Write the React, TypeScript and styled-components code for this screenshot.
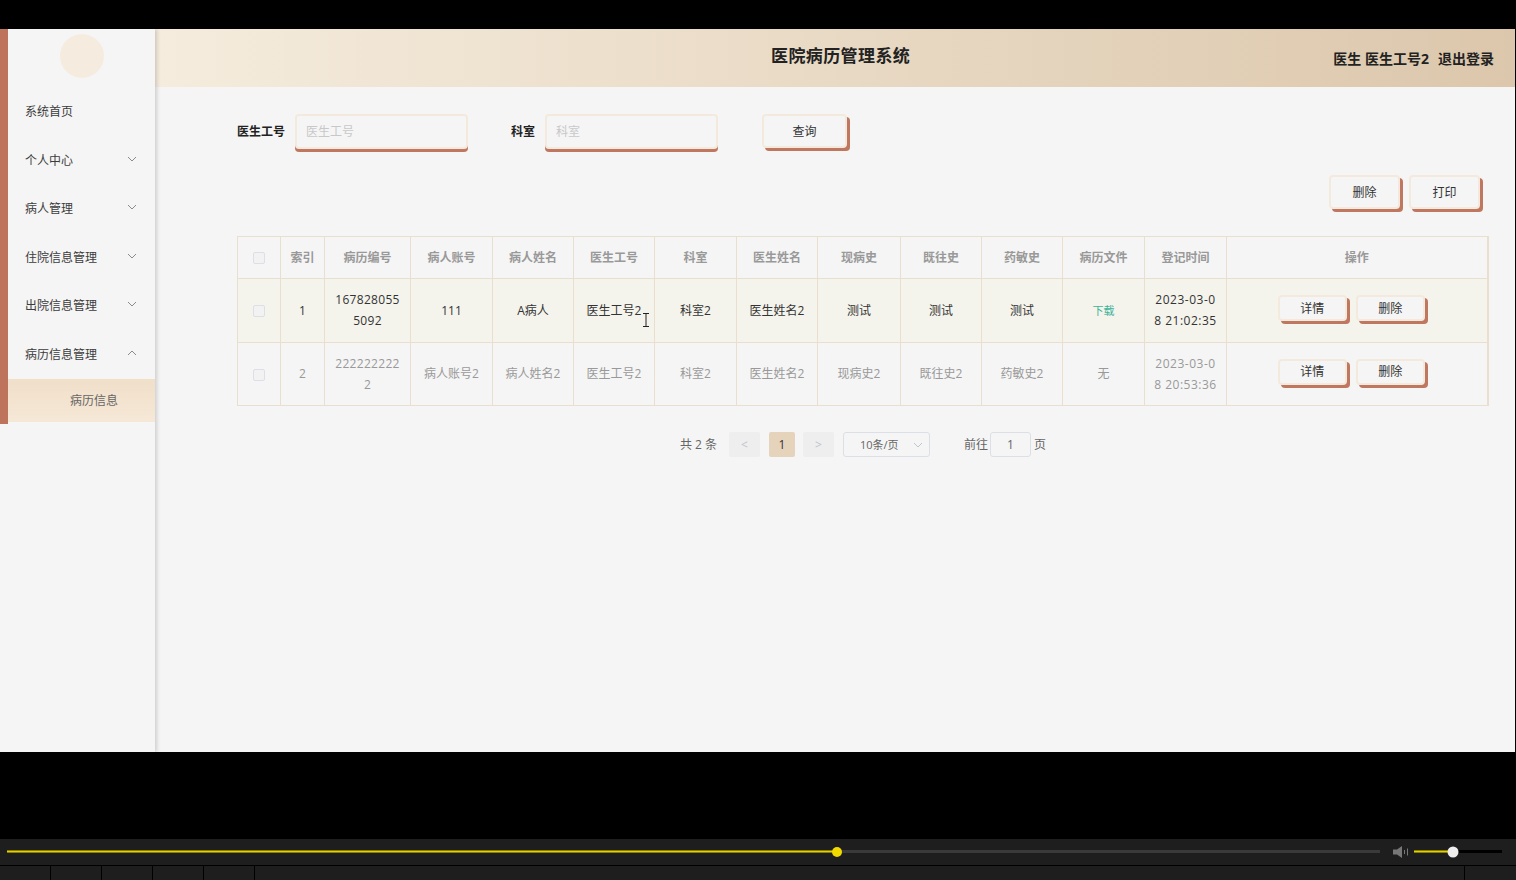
import React from "react";
import styled, { createGlobalStyle } from "styled-components";

const Global = createGlobalStyle`
  html, body { margin: 0; padding: 0; background: #000; overflow: hidden; }
  * { box-sizing: border-box; }
  body { font-family: "Open Sans", "Noto Sans CJK SC", sans-serif; font-size: 12px; }
`;

const Screen = styled.div`
  width: 1516px; height: 880px; display: flex; flex-direction: column; background: #000;
`;
const TopGap = styled.div`height: 29px; flex: none;`;
const App = styled.div`height: 723px; width: 1515px; flex: none; display: flex; background: #f5f5f5;`;
const Sidebar = styled.aside`
  width: 155px; flex: none; background: #f5f5f5; position: relative; z-index: 1;
  box-shadow: 2px 0 4px rgba(0,0,0,.16);
`;
const Menu = styled.nav`
  border-left: 8px solid #bd735c; padding-bottom: 2px; display: flex; flex-direction: column;
`;
const AvatarWrap = styled.div`height: 59px; padding: 5px 0 0 52px; flex: none;`;
const Avatar = styled.div`width: 44px; height: 44px; border-radius: 50%; background: #f5ecdf;`;
const MenuItem = styled.div`
  height: 48.5px; display: flex; align-items: center; justify-content: space-between;
  padding: 0 18px 0 17px; color: #3c3c3c; font-size: 12px; line-height: 16px;
`;
const Chevron = styled.svg`width: 10px; height: 10px; margin-top: -4px; color: #8b8b8b;`;
const SubItem = styled.div`
  height: 43px; display: flex; align-items: center; padding: 0 0 2px 62px; color: #666;
  background: linear-gradient(180deg, #f0dfc9 0%, #f6e8d7 100%);
`;
const Content = styled.main`flex: 1; min-width: 0; display: flex; flex-direction: column;`;
const Header = styled.header`
  height: 58px; flex: none; display: flex; align-items: center; position: relative;
  background: linear-gradient(90deg, #f5ecdd 0%, #dcc7ac 100%);
  padding: 0 21px 0 0; justify-content: flex-end; color: #222;
`;
const Title = styled.h1`
  position: absolute; left: 616px; top: 16px; margin: 0; font-size: 17px; line-height: 22px; font-weight: 700;
  letter-spacing: .4px;
`;
const UserInfo = styled.div`
  display: flex; gap: 9px; font-size: 14px; font-weight: 700; line-height: 20px; margin-top: 2px;
`;
const Body = styled.div`flex: 1; padding: 27px 27px 0 82px; position: relative;`;
const SearchRow = styled.form`display: flex; align-items: flex-start; height: 37px; margin: 0;`;
const Label = styled.label`
  font-size: 12px; font-weight: 700; color: #222; line-height: 36px; margin-right: 10px; width: ${p => p.$w}px;
`;
const TextBox = styled.input`
  width: 173px; height: 35px; padding: 0 9px; border: 2px solid #f3eadd; border-radius: 4px;
  background: #f5f5f5; box-shadow: 0 3px 0 #c0775f; outline: none; font: inherit; font-size: 12px;
  margin-right: ${p => p.$mr}px;
  &::placeholder { color: #c8c8c8; }
`;
const Btn = styled.button`
  width: ${p => p.$w}px; height: ${p => p.$h}px; padding: 0; border: 2px solid #f3eadd; border-radius: 4px;
  background: #f5f5f5; color: #333; font: inherit; font-size: 12px; box-shadow: 3px 3px 0 #c0775f;
`;
const ActionRow = styled.div`display: flex; justify-content: flex-end; gap: 9px; padding: 24px 8px 0 0; height: 85px;`;
const Table = styled.table`
  width: 1250px; table-layout: fixed; border-collapse: collapse; border: 1px solid #eadfcf; border-right-width: 2px;
  font-size: 12px;
  th, td { border: 1px solid #eadfcf; text-align: center; padding: 0; font-weight: 400; }
  th { height: 42px; color: #999; font-weight: 600; padding-bottom: 2px; }
  td { line-height: 21px; padding: 0 10px 1px; }
`;
const Row = styled.tr`
  height: ${p => p.$active ? 64 : 63}px; color: ${p => p.$active ? "#333" : "#999"};
  background: ${p => p.$active ? "#f4f4ec" : "transparent"};
`;
const Check = styled.span`
  display: inline-block; width: 12px; height: 12px; vertical-align: middle; border: 1px solid #dcdfe6;
  border-radius: 2px; background: #f2f2f2;
`;
const Wrapped = styled.span`
  display: block; word-break: break-all; letter-spacing: ${p => p.$ls}px; margin: 0 -2px;
`;
const Ops = styled.div`display: flex; justify-content: center; gap: 9px; margin-top: -4px; padding-right: 11px;`;
const Link = styled.span`color: #3eb39a; font-size: 11px;`;
const Pager = styled.div`
  display: flex; align-items: center; margin: 26px 0 0; padding-left: 443px; height: 25px; color: #666; font-size: 12px;
`;
const PagerText = styled.span`padding-bottom: 2px; flex: none; width: ${p => p.$w ? `${p.$w}px` : "auto"};`;
const PagerBtn = styled.span`
  width: ${p => p.$w}px; height: 25px; border-radius: 2px; display: flex; align-items: center; justify-content: center;
  margin-right: ${p => p.$mr}px; background: ${p => p.$on ? "#e6d3bc" : "#eeeeee"}; color: ${p => p.$on ? "#333" : "#c0c4cc"};
`;
const PageSize = styled.div`
  width: 87px; height: 25px; border: 1px solid #dcdfe6; border-radius: 3px; display: flex; align-items: center;
  justify-content: space-between; padding: 0 6px 2px 16px; margin-right: 34px; color: #666; font-size: 11px;
`;
const GoInput = styled.div`
  width: 41px; height: 25px; margin: 0 3px 0 2px; border: 1px solid #dcdfe6; border-radius: 3px; display: flex;
  align-items: center; justify-content: center; color: #666;
`;
const Cursor = styled.svg`position: absolute; left: 487px; top: 226px; width: 8px; height: 14px; color: #222;`;
const BottomGap = styled.div`height: 87px; flex: none;`;
const Player = styled.div`
  height: 26px; flex: none; background: #1e1e1e; display: flex; align-items: center; padding: 0 13px 1px 7px;
`;
const Track = styled.div`width: 1373px; height: 3px; background: #3a3a3a; position: relative; flex: none;`;
const TrackFill = styled.div`height: 3px; background: linear-gradient(180deg, #8c8000 0, #8c8000 1px, #e6d000 1px, #e6d000 2px, #8c8000 2px);`;
const Knob = styled.span`
  position: absolute; top: 50%; transform: translate(-50%, -50%); border-radius: 50%;
  width: ${p => p.$s}px; height: ${p => p.$s}px; background: ${p => p.$c};
`;
const Speaker = styled.svg`width: 16px; height: 14px; margin: 0 5px 0 13px; flex: none; color: #777;`;
const Volume = styled.div`width: 88px; height: 3px; background: #000; position: relative; flex: none;`;
const Thumbs = styled.div`
  height: 15px; flex: none; display: flex; border-top: 1px solid #000; background: #1e1e1e;
`;
const Thumb = styled.div`
  flex: ${p => p.$grow ? 1 : "none"}; width: ${p => p.$w}px; border-right: ${p => p.$end ? 0 : "1px solid #000"};
`;

const Down = () => (
  <Chevron viewBox="0 0 10 10" fill="none" stroke="currentColor" strokeWidth="1"><path d="M1 3l4 4 4-4" /></Chevron>
);
const Up = () => (
  <Chevron viewBox="0 0 10 10" fill="none" stroke="currentColor" strokeWidth="1"><path d="M1 7l4-4 4 4" /></Chevron>
);

const widths = [43, 44, 86, 82, 81, 81, 82, 81, 83, 81, 81, 82, 82, 261];
const heads = ["索引", "病历编号", "病人账号", "病人姓名", "医生工号", "科室", "医生姓名", "现病史", "既往史", "药敏史", "病历文件", "登记时间", "操作"];
const rows = [
  { active: true, no: "1", id: "1678280555092", cells: ["111", "A病人", "医生工号2", "科室2", "医生姓名2", "测试", "测试", "测试"], file: <Link>下载</Link>, time: "2023-03-08 21:02:35" },
  { active: false, no: "2", id: "2222222222", cells: ["病人账号2", "病人姓名2", "医生工号2", "科室2", "医生姓名2", "现病史2", "既往史2", "药敏史2"], file: "无", time: "2023-03-08 20:53:36" },
];

export default function Page() {
  return (
    <Screen>
      <Global />
      <TopGap />
      <App>
        <Sidebar>
          <Menu>
            <AvatarWrap><Avatar /></AvatarWrap>
            <MenuItem>系统首页</MenuItem>
            <MenuItem>个人中心<Down /></MenuItem>
            <MenuItem>病人管理<Down /></MenuItem>
            <MenuItem>住院信息管理<Down /></MenuItem>
            <MenuItem>出院信息管理<Down /></MenuItem>
            <MenuItem>病历信息管理<Up /></MenuItem>
            <SubItem>病历信息</SubItem>
          </Menu>
        </Sidebar>
        <Content>
          <Header>
            <Title>医院病历管理系统</Title>
            <UserInfo><span>医生 医生工号2</span><span>退出登录</span></UserInfo>
          </Header>
          <Body>
            <SearchRow>
              <Label $w={48}>医生工号</Label>
              <TextBox placeholder="医生工号" $mr={43} />
              <Label $w={24}>科室</Label>
              <TextBox placeholder="科室" $mr={44} />
              <Btn type="button" $w={85} $h={34}>查询</Btn>
            </SearchRow>
            <ActionRow>
              <Btn type="button" $w={71} $h={34}>删除</Btn>
              <Btn type="button" $w={71} $h={34}>打印</Btn>
            </ActionRow>
            <Table>
              <colgroup>{widths.map((w, i) => <col key={i} style={{ width: w }} />)}</colgroup>
              <thead>
                <tr>
                  <th><Check /></th>
                  {heads.map(h => <th key={h}>{h}</th>)}
                </tr>
              </thead>
              <tbody>
                {rows.map(r => (
                  <Row key={r.no} $active={r.active}>
                    <td><Check /></td>
                    <td>{r.no}</td>
                    <td><Wrapped $ls={0.3}>{r.id}</Wrapped></td>
                    {r.cells.map((c, i) => <td key={i}>{c}</td>)}
                    <td>{r.file}</td>
                    <td><Wrapped $ls={0.5}>{r.time}</Wrapped></td>
                    <td>
                      <Ops>
                        <Btn type="button" $w={69} $h={26}>详情</Btn>
                        <Btn type="button" $w={69} $h={26}>删除</Btn>
                      </Ops>
                    </td>
                  </Row>
                ))}
              </tbody>
            </Table>
            <Pager>
              <PagerText $w={49}>共 2 条</PagerText>
              <PagerBtn $w={31} $mr={9}>&lt;</PagerBtn>
              <PagerBtn $w={26} $mr={8} $on>1</PagerBtn>
              <PagerBtn $w={31} $mr={9}>&gt;</PagerBtn>
              <PageSize>10条/页<Chevron viewBox="0 0 10 10" fill="none" stroke="#c0c4cc" strokeWidth="1" style={{ marginTop: 2 }}><path d="M1 3l4 4 4-4" /></Chevron></PageSize>
              <PagerText>前往</PagerText>
              <GoInput>1</GoInput>
              <PagerText>页</PagerText>
            </Pager>
            <Cursor viewBox="0 0 8 14" fill="none" stroke="currentColor" strokeWidth="1"><path d="M1 .5h6M4 .5v13M1 13.5h6" /></Cursor>
          </Body>
        </Content>
      </App>
      <BottomGap />
      <Player>
        <Track>
          <TrackFill style={{ width: 830 }} />
          <Knob $s={10} $c="#f2d900" style={{ left: 830 }} />
        </Track>
        <Speaker viewBox="0 0 16 14" fill="currentColor">
          <path d="M0 4.5h4L9 1v12L4 9.500H0z" />
          <path d="M11 5h1v4h-1zM14 3.500h1v7h-1z" />
        </Speaker>
        <Volume>
          <TrackFill style={{ width: 39 }} />
          <Knob $s={11} $c="#eeeeee" style={{ left: 39 }} />
        </Volume>
      </Player>
      <Thumbs>
        {[51, 51, 51, 51, 51].map((w, i) => <Thumb key={i} $w={w} />)}
        <Thumb $grow />
        <Thumb $w={51} $end />
      </Thumbs>
    </Screen>
  );
}
